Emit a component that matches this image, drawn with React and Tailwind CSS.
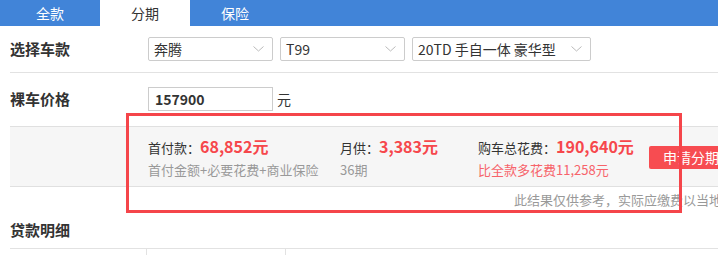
const font = { fontFamily: '"Noto Sans CJK SC", "Noto Sans", sans-serif' }

function Chevron() {
  return (
    <svg width="11" height="6" viewBox="0 0 11 6" className="shrink-0">
      <path d="M0.5 0.5 L5.5 5 L10.5 0.5" fill="none" stroke="#bbb" strokeWidth="1" />
    </svg>
  )
}

function Select({ w, children }) {
  return (
    <div className={`${w} h-[24px] border border-[#ccc] rounded-[2px] flex items-center justify-between pl-[5px] pr-[8px] text-[14px] text-[#333] bg-white`}>
      <span className="leading-none">{children}</span>
      <Chevron />
    </div>
  )
}

export default function App() {
  return (
    <div className="relative w-[718px] h-[255px] overflow-hidden bg-white text-[#333]" style={font}>
      {/* tabs */}
      <div className="flex h-[26px] bg-[#4184d8] text-[14px]">
        <div className="w-[100px] flex items-center justify-center text-white">全款</div>
        <div className="w-[90px] flex items-center justify-center bg-white text-[#333]">分期</div>
        <div className="w-[90px] flex items-center justify-center text-white">保险</div>
      </div>

      <div className="pl-[10px]">
        {/* car model row */}
        <div className="flex items-center h-[47px] border-b border-[#e2e2e2]">
          <div className="w-[138px] text-[15px] font-bold text-[#333]">选择车款</div>
          <div className="flex gap-[7px]">
            <Select w="w-[125px]">奔腾</Select>
            <Select w="w-[125px]">T99</Select>
            <Select w="w-[179px]">20TD 手自一体 豪华型</Select>
          </div>
        </div>

        {/* price row */}
        <div className="flex items-start h-[53px] pt-[14px]">
          <div className="w-[138px] text-[15px] font-bold text-[#333] mt-[1px]">裸车价格</div>
          <div className="w-[125px] h-[24px] border border-[#ccc] flex items-center px-[6px] text-[14px] font-bold text-[#333]">157900</div>
          <span className="ml-[4px] text-[14px] mt-[2px]">元</span>
        </div>

        {/* result box */}
        <div className="flex h-[61px] bg-[#f6f6f6] border-y border-[#e0e0e0]">
          <div className="w-[138px] shrink-0" />
          <div className="w-[192px] shrink-0 pt-[9px]">
            <div className="flex items-baseline text-[13px] leading-[20px]">
              首付款：<span className="text-[16px] font-bold text-[#f6474c]">68,852元</span>
            </div>
            <div className="text-[13px] text-[#999] leading-[20px] mt-[2px]">首付金额+必要花费+商业保险</div>
          </div>
          <div className="w-[138px] shrink-0 pt-[9px]">
            <div className="flex items-baseline text-[13px] leading-[20px]">
              月供：<span className="text-[16px] font-bold text-[#f6474c]">3,383元</span>
            </div>
            <div className="text-[13px] text-[#999] leading-[20px] mt-[2px]">36期</div>
          </div>
          <div className="w-[171px] shrink-0 pt-[9px]">
            <div className="flex items-baseline text-[13px] leading-[20px] whitespace-nowrap">
              购车总花费：<span className="text-[16px] font-bold text-[#f6474c]">190,640元</span>
            </div>
            <div className="text-[13px] text-[#f7636a] leading-[20px] mt-[2px] whitespace-nowrap">比全款多花费11,258元</div>
          </div>
          <div className="shrink-0 pt-[19px]">
            <div className="w-[80px] h-[23px] bg-[#f74c51] text-white text-[14px] flex items-center pl-[14px] rounded-l-[2px] whitespace-nowrap">申请分期</div>
          </div>
        </div>

        {/* note */}
        <div className="h-[26px] flex items-center pl-[504px] text-[13px] text-[#999] whitespace-nowrap">
          此结果仅供参考，实际应缴费以当地为准
        </div>

        {/* loan details */}
        <div className="h-[35px] flex items-center text-[15px] font-bold text-[#333]">贷款明细</div>
        <div className="flex border-t border-[#e2e2e2] h-[20px]">
          <div className="w-[137px] border-r border-[#e2e2e2]" />
          <div className="w-[139px] border-r border-[#e2e2e2]" />
        </div>
      </div>

      {/* red annotation frame */}
      <div className="absolute left-[126px] top-[113px] w-[556px] h-[100px] border-[3px] border-[#f5454a] pointer-events-none" />
    </div>
  )
}
